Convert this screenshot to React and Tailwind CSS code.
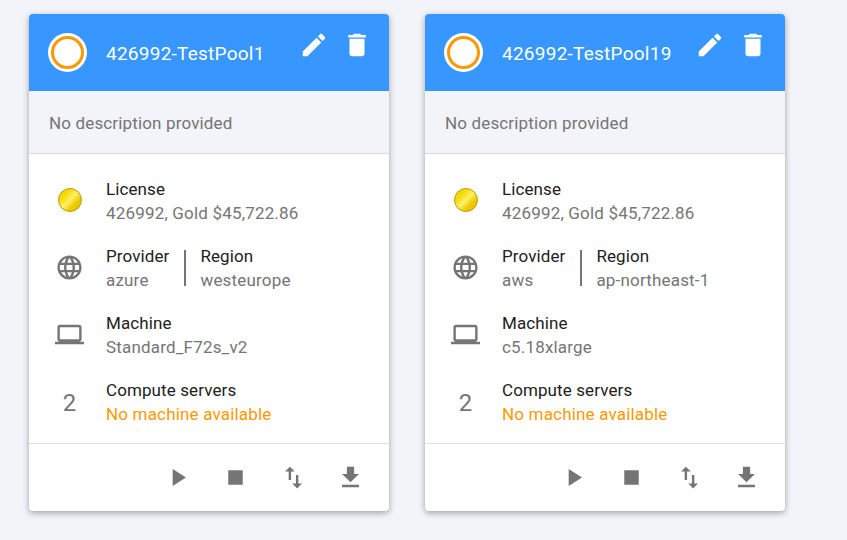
const P = {
  edit: "M3 17.25V21h3.75L17.81 9.94l-3.75-3.75L3 17.25zM20.71 7.04c.39-.39.39-1.02 0-1.41l-2.34-2.34c-.39-.39-1.02-.39-1.41 0l-1.83 1.83 3.75 3.75 1.83-1.83z",
  del: "M6 19c0 1.1.9 2 2 2h8c1.1 0 2-.9 2-2V7H6v12zM19 4h-3.5l-1-1h-5l-1 1H5v2h14V4z",
  globe: "M11.99 2C6.47 2 2 6.48 2 12s4.47 10 9.99 10C17.52 22 22 17.52 22 12S17.52 2 11.99 2zm6.93 6h-2.95c-.32-1.25-.78-2.45-1.38-3.56 1.84.63 3.37 1.91 4.33 3.56zM12 4.04c.83 1.2 1.48 2.53 1.91 3.96h-3.82c.43-1.43 1.08-2.76 1.91-3.96zM4.26 14C4.1 13.36 4 12.69 4 12s.1-1.36.26-2h3.38c-.08.66-.14 1.32-.14 2 0 .68.06 1.34.14 2H4.26zm.82 2h2.95c.32 1.25.78 2.45 1.38 3.56-1.84-.63-3.37-1.9-4.33-3.56zm2.95-8H5.08c.96-1.66 2.49-2.93 4.33-3.56C8.81 5.55 8.35 6.75 8.03 8zM12 19.96c-.83-1.2-1.48-2.53-1.91-3.96h3.82c-.43 1.43-1.08 2.76-1.91 3.96zM14.34 14H9.66c-.09-.66-.16-1.32-.16-2 0-.68.07-1.35.16-2h4.68c.09.65.16 1.32.16 2 0 .68-.07 1.34-.16 2zm.25 5.56c.6-1.11 1.06-2.31 1.38-3.56h2.95c-.96 1.65-2.49 2.93-4.33 3.56zM16.36 14c.08-.66.14-1.32.14-2 0-.68-.06-1.34-.14-2h3.38c.16.64.26 1.31.26 2s-.1 1.36-.26 2h-3.38z",
  laptop: "M20 18c1.1 0 1.99-.9 1.99-2L22 6c0-1.1-.9-2-2-2H4c-1.1 0-2 .9-2 2v10c0 1.1.9 2 2 2H0v2h24v-2h-4zM4 6h16v10H4V6z",
  play: "M8 5v14l11-7z",
  stop: "M6 6h12v12H6z",
  swap: "M9 3L5 6.99h3V14h2V6.99h3L9 3zm7 14.01V10h-2v7.01h-3L15 21l4-3.99h-3z",
  dl: "M19 9h-4V3H9v6H5l7 7 7-7zM5 18v2h14v-2H5z",
};

function Icon({ d, className }) {
  return (
    <svg viewBox="0 0 24 24" fill="currentColor" className={className}>
      <path d={d} />
    </svg>
  );
}

function Row({ icon, children }) {
  return (
    <div className="flex items-center h-[48px]">
      <div className="w-[41px] mr-[16px] flex items-center justify-center text-[#757575]">{icon}</div>
      <div className="flex">{children}</div>
    </div>
  );
}

function Cell({ label, value, valueClass = "text-[#757575]" }) {
  return (
    <div className="flex flex-col">
      <div className="text-[17px] leading-[24px] tracking-[0.1px] text-[#212121]">{label}</div>
      <div className={`text-[17px] leading-[24px] tracking-[0.18px] ${valueClass}`}>{value}</div>
    </div>
  );
}

function Card({ name, provider, region, machine }) {
  return (
    <div className="w-[360px] h-[497px] rounded-[4px] bg-white shadow-[0_2px_6px_rgba(0,0,0,0.35)] overflow-hidden flex flex-col">
      <div className="h-[77px] bg-[#3896ff] flex items-center pl-[19px] pr-[17px] text-white">
        <div className="w-[39px] h-[39px] rounded-full bg-white flex items-center justify-center">
          <div className="w-[33px] h-[33px] rounded-full border-[3px] border-[#ff9800] bg-white" />
        </div>
        <div className="ml-[19px] pt-[2px] text-[19px] leading-[24px] tracking-[0.25px] flex-1 truncate">{name}</div>
        <div className="flex items-center gap-[13px] self-start pt-[16px]">
          <Icon d={P.edit} className="w-[30px] h-[30px]" />
          <Icon d={P.del} className="w-[30px] h-[30px]" />
        </div>
      </div>
      <div className="h-[63px] bg-[#f3f4f9] border-b border-[#d9d9dc] flex items-center pl-[20px] pt-[3px] text-[17px] tracking-[0.15px] text-[#757575]">
        No description provided
      </div>
      <div className="h-[290px] border-b border-[#e0e0e0] pl-[20px] pt-[23px] flex flex-col gap-[19px]">
        <Row icon={<div className="w-[24px] h-[24px] -mt-[2px] rounded-full border border-[#b89a00] bg-[linear-gradient(135deg,#f2cd00_0%,#f8dc10_30%,#fff06a_50%,#f0cb00_70%,#e0b800_100%)]" />}>
          <Cell label="License" value="426992, Gold $45,722.86" />
        </Row>
        <Row icon={<Icon d={P.globe} className="w-[29px] h-[29px] -mt-[2px]" />}>
          <Cell label="Provider" value={provider} />
          <div className="w-[2px] h-[36px] bg-[#757575] ml-[15px] mr-[14px] self-center" />
          <Cell label="Region" value={region} />
        </Row>
        <Row icon={<Icon d={P.laptop} className="w-[29px] h-[29px] -mt-[2px]" />}>
          <Cell label="Machine" value={machine} />
        </Row>
        <Row icon={<span className="text-[24px] leading-[28px] mt-[2px] text-[#757575]">2</span>}>
          <Cell label="Compute servers" value="No machine available" valueClass="text-[#ff9800]" />
        </Row>
      </div>
      <div className="flex-1 flex items-center justify-end pr-[24px] pb-[1px] gap-[28.5px] text-[#757575]">
        <Icon d={P.play} className="w-[29px] h-[29px] -ml-[1px] mr-[1px]" />
        <Icon d={P.stop} className="w-[29px] h-[29px]" />
        <Icon d={P.swap} className="w-[29px] h-[29px]" />
        <Icon d={P.dl} className="w-[29px] h-[29px]" />
      </div>
    </div>
  );
}

export default function App() {
  return (
    <div className="w-[847px] h-[540px] overflow-hidden bg-[#f3f4f9] pt-[14px] pl-[29px] flex gap-[36px] font-['Roboto',sans-serif]">
      <Card name="426992-TestPool1" provider="azure" region="westeurope" machine="Standard_F72s_v2" />
      <Card name="426992-TestPool19" provider="aws" region="ap-northeast-1" machine="c5.18xlarge" />
    </div>
  );
}
